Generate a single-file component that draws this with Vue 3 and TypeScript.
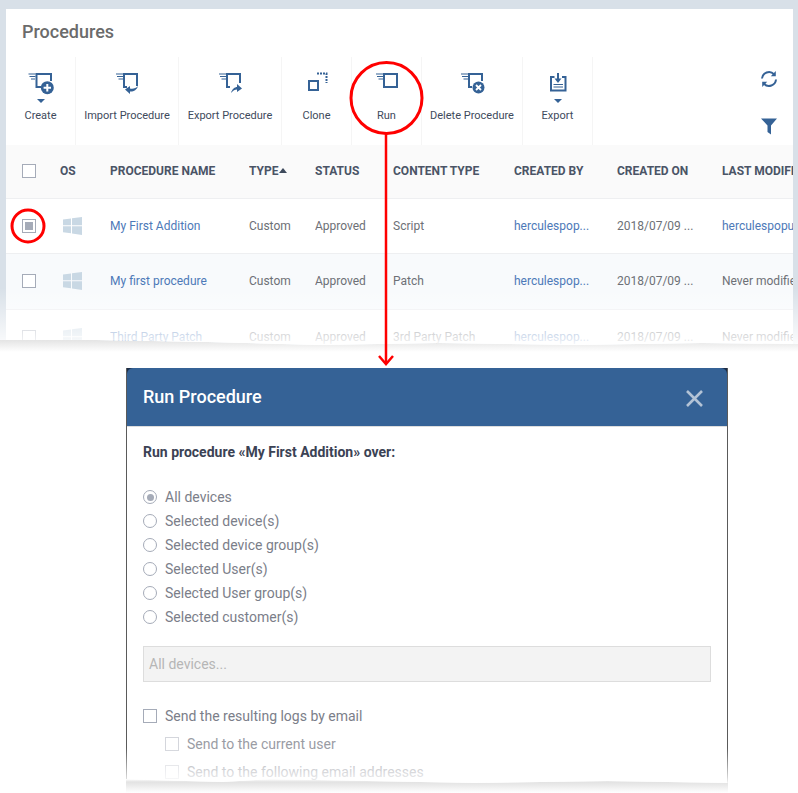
<script setup lang="ts">
interface ProcRow {
  name: string
  type: string
  status: string
  content: string
  by: string
  on: string
  modified: string
  modifiedLink: boolean
  checked: boolean
}

const tools = [
  { key: 'create', label: 'Create', width: 70, caret: true },
  { key: 'import', label: 'Import Procedure', width: 103, caret: false },
  { key: 'export', label: 'Export Procedure', width: 103, caret: false },
  { key: 'clone', label: 'Clone', width: 70, caret: false },
  { key: 'run', label: 'Run', width: 70, caret: false },
  { key: 'delete', label: 'Delete Procedure', width: 101, caret: false },
  { key: 'save', label: 'Export', width: 70, caret: true },
]

const columns = ['PROCEDURE NAME', 'TYPE', 'STATUS', 'CONTENT TYPE', 'CREATED BY', 'CREATED ON', 'LAST MODIFIED BY']

const rows: ProcRow[] = [
  { name: 'My First Addition', type: 'Custom', status: 'Approved', content: 'Script', by: 'herculespop...', on: '2018/07/09 ...', modified: 'herculespopup', modifiedLink: true, checked: true },
  { name: 'My first procedure', type: 'Custom', status: 'Approved', content: 'Patch', by: 'herculespop...', on: '2018/07/09 ...', modified: 'Never modified', modifiedLink: false, checked: false },
  { name: 'Third Party Patch', type: 'Custom', status: 'Approved', content: '3rd Party Patch', by: 'herculespop...', on: '2018/07/09 ...', modified: 'Never modified', modifiedLink: false, checked: false },
]

const targets = ['All devices', 'Selected device(s)', 'Selected device group(s)', 'Selected User(s)', 'Selected User group(s)', 'Selected customer(s)']
</script>

<template>
  <div class="page">
    <div class="top-wrap">
      <div class="top">
        <div class="card">
          <h1 class="title">Procedures</h1>

          <div class="toolbar">
            <div
              v-for="tool in tools"
              :key="tool.key"
              class="tool"
              :style="{ width: tool.width + 'px' }"
            >
              <svg class="tool-icon" width="30" height="28" viewBox="-15 0 30 28">
                <!-- speed lines shared by the procedure icons -->
                <g v-if="['create', 'import', 'export', 'run', 'delete'].includes(tool.key)" stroke="#356296" stroke-width="1.2" fill="none">
                  <path v-if="tool.key === 'create'" d="M-12.5 2h7M-11.5 4.5h6M-10 7h4" />
                  <path v-else d="M-11 2h7M-10 4.5h6M-8.5 7h4.5" />
                </g>

                <template v-if="tool.key === 'create'">
                  <path d="M-4.5 1V15H0M-4.5 2H10V9" fill="none" stroke="#356296" stroke-width="2" />
                  <circle cx="6.3" cy="15.7" r="6.5" fill="#356296" />
                  <path d="M6.3 12v7.4M2.6 15.7H10" stroke="#fff" stroke-width="2" />
                </template>

                <template v-else-if="tool.key === 'import'">
                  <path d="M-3 2H10V14M-3 1V15H0" fill="none" stroke="#356296" stroke-width="2" />
                  <path d="M11 14C10 18 6 20 3 19.5V22L-2 17.5L3 14V16.5C6 17 9 16.5 11 14Z" fill="#356296" />
                </template>

                <template v-else-if="tool.key === 'export'">
                  <path d="M-3 2H10V11M-3 1V15H0" fill="none" stroke="#356296" stroke-width="2" />
                  <path d="M1 21C2 17 5 15 7 15V12L12 16.5L7 20V17.5C5 17.5 3 18.5 1 21Z" fill="#356296" />
                </template>

                <template v-else-if="tool.key === 'clone'">
                  <path d="M0 1.5H9.5V11" fill="none" stroke="#356296" stroke-width="2" stroke-dasharray="2 1" />
                  <rect x="-8" y="9" width="9" height="9" fill="none" stroke="#356296" stroke-width="2" />
                </template>

                <rect v-else-if="tool.key === 'run'" x="-3" y="2" width="13" height="13" fill="none" stroke="#356296" stroke-width="2" />

                <template v-else-if="tool.key === 'delete'">
                  <path d="M-3 2H10V9M-3 1V15H0" fill="none" stroke="#356296" stroke-width="2" />
                  <circle cx="6.5" cy="15.5" r="6" fill="#356296" />
                  <path d="M4 13l5 5M9 13l-5 5" stroke="#fff" stroke-width="1.8" />
                </template>

                <template v-else>
                  <path d="M-3.5 5H-7V18.5H7.5V5H4" fill="none" stroke="#356296" stroke-width="2" />
                  <path d="M0 1V9" stroke="#356296" stroke-width="2" />
                  <path d="M-3.5 6.5H3.5L0 11Z" fill="#356296" />
                  <path d="M-4.5 12.5H5M-4.5 15H5" stroke="#356296" stroke-width="1.2" />
                </template>
              </svg>
              <span class="caret-slot"><i v-if="tool.caret" class="caret"></i></span>
              <span class="tool-label">{{ tool.label }}</span>
            </div>

            <div class="side-tools">
              <svg width="20" height="20" viewBox="0 0 20 20" fill="none">
                <path d="M3 9.5A7 7 0 0 1 15 5.2M17 10.5A7 7 0 0 1 5 14.8" stroke="#356296" stroke-width="2" />
                <path d="M16.8 2V7.2H11.8Z M3.2 18V12.8H8.2Z" fill="#356296" />
              </svg>
              <svg width="18" height="18" viewBox="0 0 18 18">
                <path d="M1 1.5H17L11 8.5V17.5L7.5 15V8.5Z" fill="#356296" />
              </svg>
            </div>
          </div>

          <div class="grid grid-head">
            <div class="cell-check"><span class="box"></span></div>
            <div>OS</div>
            <div v-for="col in columns" :key="col" class="head-cell">
              {{ col }}<i v-if="col === 'TYPE'" class="sort"></i>
            </div>
          </div>

          <div v-for="(row, i) in rows" :key="row.name" class="grid grid-row" :class="{ alt: i === 1 }">
            <div class="cell-check"><span class="box" :class="{ on: row.checked }"></span></div>
            <div>
              <svg width="19" height="18" viewBox="0 0 19 18" class="win">
                <path d="M0 2.6L8 1.4V8.3H0ZM9 1.2L19 0V8.3H9ZM0 9.3H8V16.3L0 15.2ZM9 9.3H19V18L9 16.5Z" fill="#c9d8e4" />
              </svg>
            </div>
            <div class="link">{{ row.name }}</div>
            <div>{{ row.type }}</div>
            <div>{{ row.status }}</div>
            <div>{{ row.content }}</div>
            <div class="link">{{ row.by }}</div>
            <div>{{ row.on }}</div>
            <div :class="{ link: row.modifiedLink }">{{ row.modified }}</div>
          </div>
        </div>
        <div class="fade fade-top"></div>
      </div>
    </div>

    <div class="modal-wrap">
      <div class="modal">
        <div class="modal-header">
          <span class="modal-title">Run Procedure</span>
          <svg class="modal-close" width="17" height="17" viewBox="0 0 17 17">
            <path d="M1 1L16 16M16 1L1 16" stroke="#b3c3d6" stroke-width="2.6" />
          </svg>
        </div>
        <div class="modal-body">
          <p class="question">Run procedure «My First Addition» over:</p>

          <div class="radio-list">
            <div v-for="(target, i) in targets" :key="target" class="radio-row">
              <span class="radio" :class="{ on: i === 0 }"></span>
              <span>{{ target }}</span>
            </div>
          </div>

          <div class="fake-input">All devices...</div>

          <div class="check-row">
            <span class="box small"></span>
            <span>Send the resulting logs by email</span>
          </div>
          <div class="check-row sub">
            <span class="box small dim"></span>
            <span>Send to the current user</span>
          </div>
          <div class="check-row sub">
            <span class="box small dim"></span>
            <span>Send to the following email addresses</span>
          </div>
        </div>
        <div class="fade fade-modal"></div>
      </div>
    </div>

    <!-- red callouts drawn over the screenshot -->
    <svg class="callouts" width="798" height="793" viewBox="0 0 798 793" fill="none">
      <circle cx="386.5" cy="98" r="35.5" stroke="#f00" stroke-width="3" />
      <circle cx="28" cy="226" r="16" stroke="#f00" stroke-width="3" />
      <path d="M386 134V364" stroke="#f00" stroke-width="2.5" />
      <path d="M379 356L386 364L393 356" stroke="#f00" stroke-width="2.5" />
    </svg>
  </div>
</template>

<style>
html,
body {
  margin: 0;
  background: #fff;
  overflow: hidden;
}
</style>

<style scoped>
.page {
  position: relative;
  width: 798px;
  height: 793px;
  overflow: hidden;
  background: #fff;
  font-family: Roboto, "Liberation Sans", sans-serif;
  font-size: 12px;
  color: #6d7076;
}

.top-wrap {
  height: 352px;
  background: linear-gradient(#fff 337px, #e4e4e4 340px, #fff 352px);
}

.top {
  position: relative;
  height: 347px;
  padding: 9px 5px 0 6px;
  box-sizing: border-box;
  overflow: hidden;
  background: #d8e0e8;
  clip-path: polygon(0 0, 100% 0, 100% 344px, 88% 343px, 72% 345px, 55% 343px, 40% 345px, 26% 342px, 12% 340px, 0 340px);
}

.card {
  background: #fff;
  height: 400px;
}

.title {
  margin: 0;
  height: 48px;
  padding: 13px 0 0 16px;
  box-sizing: border-box;
  font-size: 18px;
  line-height: 20px;
  font-weight: 500;
  color: #6b6b6b;
}

.toolbar {
  display: flex;
  height: 88px;
}

.tool {
  display: flex;
  flex-direction: column;
  align-items: center;
  padding-top: 15px;
  box-sizing: border-box;
  border-right: 1px solid #f5f5f5;
  color: #3e4a5c;
  font-size: 11px;
  white-space: nowrap;
}

.tool-icon {
  flex: none;
}

.caret-slot {
  height: 6px;
  margin-top: -1px;
  margin-bottom: 1px;
  display: flex;
  justify-content: center;
}

.caret {
  width: 0;
  height: 0;
  border: 4px solid transparent;
  border-top: 4px solid #356296;
  border-bottom: 0;
}

.tool-label {
  margin-top: 3px;
  line-height: 14px;
}

.side-tools {
  margin-left: auto;
  width: 48px;
  display: flex;
  flex-direction: column;
  align-items: center;
  gap: 28px;
  padding-top: 12px;
}

.grid {
  display: grid;
  grid-template-columns: 54px 50px 139px 66px 78px 121px 103px 105px 1fr;
  align-items: center;
  white-space: nowrap;
  box-sizing: border-box;
}

.grid > div {
  overflow: hidden;
}

.grid-head {
  height: 54px;
  padding-bottom: 2px;
  background: #fafafa;
  border-bottom: 1px solid #eeeff1;
  font-weight: 700;
  color: #4a5466;
}

.grid-row {
  height: 55px;
  padding-bottom: 1px;
  border-bottom: 1px solid #eeeff1;
  background: #fff;
}

.grid-row.alt {
  height: 56px;
  background: #f8fafc;
}

.cell-check {
  padding-left: 16px;
  display: flex;
}

.box {
  width: 14px;
  height: 14px;
  box-sizing: border-box;
  border: 1px solid #a5abb8;
  background: #fff;
  display: inline-block;
  position: relative;
}

.box.on::after {
  content: "";
  position: absolute;
  inset: 2px;
  background: #a5abb8;
}

.sort {
  display: inline-block;
  width: 0;
  height: 0;
  margin-left: 1px;
  vertical-align: 2px;
  border: 4px solid transparent;
  border-top: 0;
  border-bottom: 5px solid #3e4a5c;
}

.win {
  display: block;
  margin-left: 3px;
}

.link {
  color: #4d79b8;
}

.fade {
  position: absolute;
  left: 0;
  right: 0;
  pointer-events: none;
}

.fade-top {
  top: 288px;
  bottom: 0;
  background: linear-gradient(rgba(255, 255, 255, 0), rgba(255, 255, 255, 0.78) 85%, #fff);
}

.modal-wrap {
  height: 427px;
  margin-top: 16px;
  background: linear-gradient(#fff 411px, #e2e2e2 414px, #fff 425px);
  margin-left: 126px;
  width: 602px;
}

.modal {
  position: relative;
  height: 417px;
  box-sizing: border-box;
  border-left: 1px solid #5a5a5a;
  border-right: 1px solid #5a5a5a;
  background: linear-gradient(#1c2d48 20px, #fff 20px);
  clip-path: polygon(0 0, 100% 0, 100% 415px, 80% 413px, 58% 415px, 40% 413px, 24% 411px, 16% 414px, 4% 412px, 0 411px);
}

.modal-header {
  height: 59px;
  box-sizing: border-box;
  padding: 0 24px 0 16px;
  display: flex;
  align-items: center;
  justify-content: space-between;
  background: #356296;
  border-bottom: 1px solid #ddd;
  border-radius: 6px 6px 0 0;
}

.modal-title {
  font-size: 18px;
  font-weight: 500;
  color: #fff;
  margin-bottom: 2px;
}

.modal-close {
  margin-top: 2px;
}

.modal-body {
  padding: 0 16px;
  font-size: 14px;
  color: #7b7e89;
}

.question {
  margin: 0;
  height: 58px;
  padding-top: 17px;
  box-sizing: border-box;
  line-height: 17px;
  font-weight: 700;
  color: #3b4254;
}

.radio-list {
  display: flex;
  flex-direction: column;
}

.radio-row {
  height: 24px;
  display: flex;
  align-items: center;
  gap: 8px;
}

.radio {
  width: 14px;
  height: 14px;
  box-sizing: border-box;
  border: 1.5px solid #a5abb8;
  border-radius: 50%;
  position: relative;
}

.radio.on::after {
  content: "";
  position: absolute;
  inset: 2.5px;
  border-radius: 50%;
  background: #a5abb8;
}

.fake-input {
  height: 36px;
  margin: 17px 0 20px;
  padding-left: 5px;
  box-sizing: border-box;
  line-height: 34px;
  background: #f3f3f3;
  border: 1px solid #ddd;
  color: #b6b6b6;
}

.check-row {
  height: 28px;
  display: flex;
  align-items: center;
  gap: 8px;
}

.check-row.sub {
  padding-left: 22px;
  color: #9a9ca4;
}

.box.small {
  flex: none;
}

.box.dim {
  border-color: #d4d6dc;
}

.fade-modal {
  top: 380px;
  bottom: 0;
  left: -1px;
  right: -1px;
  background: linear-gradient(rgba(255, 255, 255, 0), rgba(255, 255, 255, 0.75) 80%, #fff);
}

.callouts {
  position: absolute;
  top: 0;
  left: 0;
  pointer-events: none;
}
</style>
